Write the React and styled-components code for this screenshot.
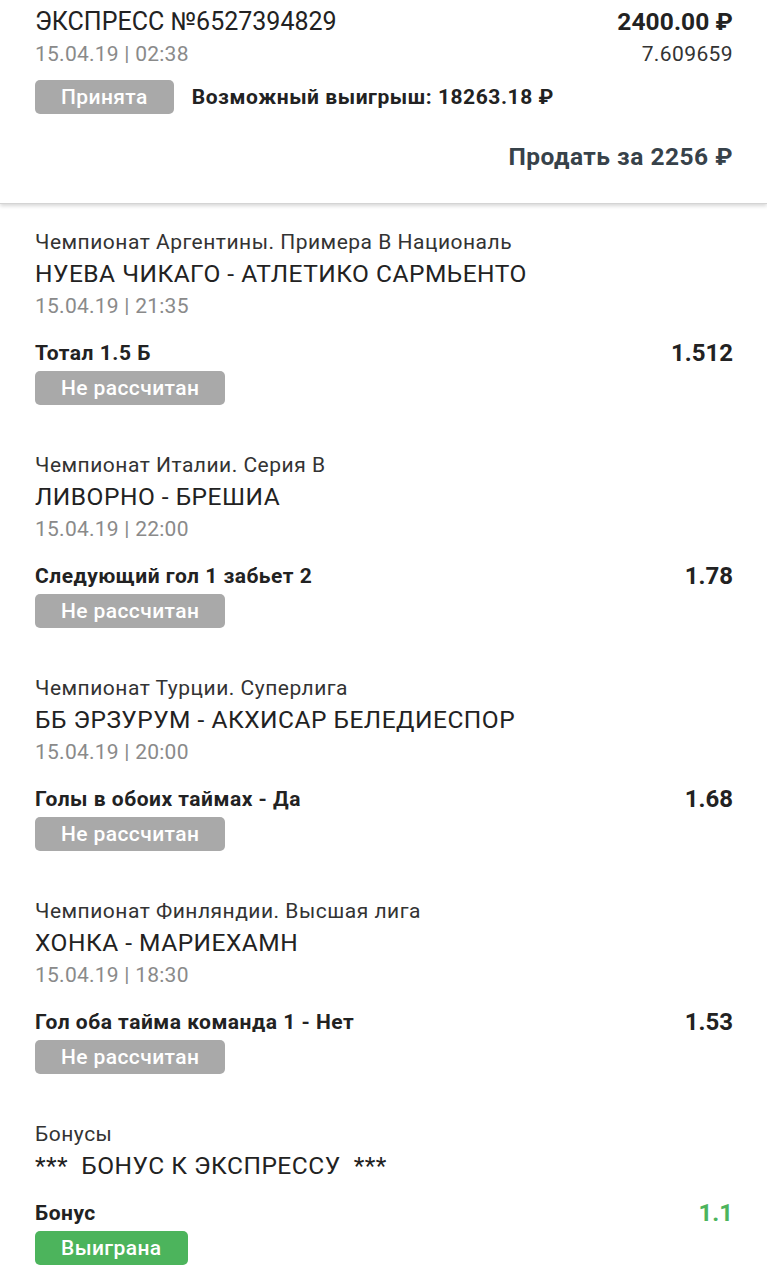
import React from "react";
import styled, { createGlobalStyle } from "styled-components";

const Global = createGlobalStyle`
  html, body { margin: 0; padding: 0; background: #ffffff; }
  body { font-family: Roboto, "Noto Sans", Arial, sans-serif; color: #222; }
`;

const Page = styled.div`
  width: 767px;
  background: #fff;
`;

const Header = styled.header`
  padding: 7px 34px 31px 35px;
  border-bottom: 1px solid #d4d4d4;
  box-shadow: 0 2px 4px rgba(0, 0, 0, 0.16);
  position: relative;
`;

const Row = styled.div`
  display: flex;
  justify-content: space-between;
  align-items: center;
  margin-top: ${(p) => p.$mt || 0}px;
`;

const Title = styled.div`
  font-size: 25px;
  line-height: 30px;
  color: #222;
`;

const Amount = styled.div`
  font-size: 24.5px;
  letter-spacing: 0.1px;
  line-height: 30px;
  font-weight: 700;
  color: #222;
`;

const Sub = styled.div`
  font-size: 21px;
  letter-spacing: ${(p) => (p.$dark ? 0.4 : 0.25)}px;
  line-height: 26px;
  color: ${(p) => (p.$dark ? "#333" : "#8a8a8a")};
`;

const Status = styled.div`
  display: flex;
  align-items: center;
  gap: 18px;
  margin-top: 13px;
`;

const Badge = styled.span`
  display: inline-flex;
  align-items: center;
  height: 34px;
  padding: 0 26px;
  border-radius: 5px;
  background: ${(p) => (p.$won ? "#4cb45c" : "#a9a9a9")};
  color: #fff;
  font-size: 21px;
  letter-spacing: 0.4px;
  font-weight: 500;
  box-sizing: border-box;
`;

const Possible = styled.span`
  font-size: 21px;
  letter-spacing: 0.55px;
  font-weight: 700;
  color: #222;
`;

const Sell = styled.div`
  margin-top: 28px;
  text-align: right;
  font-size: 24.5px;
  letter-spacing: 0.5px;
  line-height: 30px;
  font-weight: 700;
  color: #37424a;
`;

const List = styled.main`
  padding: 22px 34px 40px 35px;
  display: flex;
  flex-direction: column;
  gap: 44px;
`;

const Event = styled.section`
  display: flex;
  flex-direction: column;
`;

const League = styled.div`
  font-size: 21px;
  letter-spacing: 0.5px;
  line-height: 32px;
  color: #333;
`;

const Teams = styled.div`
  font-size: 24.5px;
  letter-spacing: 0.5px;
  line-height: 32px;
  color: #222;
`;

const DateLine = styled.div`
  font-size: 21px;
  letter-spacing: 0.25px;
  line-height: 32px;
  color: #8a8a8a;
`;

const BetRow = styled.div`
  display: flex;
  justify-content: space-between;
  align-items: center;
  margin-top: ${(p) => p.$mt}px;
  height: 28px;
`;

const BetName = styled.div`
  font-size: 21px;
  letter-spacing: 0.5px;
  font-weight: 700;
  color: #222;
`;

const Odds = styled.div`
  font-size: 24px;
  font-weight: 700;
  color: ${(p) => (p.$won ? "#4cb45c" : "#222")};
`;

const BadgeWrap = styled.div`
  margin-top: 4px;
  display: flex;
`;

const events = [
  {
    league: "Чемпионат Аргентины. Примера В Националь",
    teams: "НУЕВА ЧИКАГО - АТЛЕТИКО САРМЬЕНТО",
    date: "15.04.19 | 21:35",
    bet: "Тотал 1.5 Б",
    odds: "1.512",
  },
  {
    league: "Чемпионат Италии. Серия В",
    teams: "ЛИВОРНО - БРЕШИА",
    date: "15.04.19 | 22:00",
    bet: "Следующий гол 1 забьет 2",
    odds: "1.78",
  },
  {
    league: "Чемпионат Турции. Суперлига",
    teams: "ББ ЭРЗУРУМ - АКХИСАР БЕЛЕДИЕСПОР",
    date: "15.04.19 | 20:00",
    bet: "Голы в обоих таймах - Да",
    odds: "1.68",
  },
  {
    league: "Чемпионат Финляндии. Высшая лига",
    teams: "ХОНКА - МАРИЕХАМН",
    date: "15.04.19 | 18:30",
    bet: "Гол оба тайма команда 1 - Нет",
    odds: "1.53",
  },
];

export default function App() {
  return (
    <Page>
      <Global />
      <Header>
        <Row>
          <Title>ЭКСПРЕСС №6527394829</Title>
          <Amount>2400.00 ₽</Amount>
        </Row>
        <Row $mt={4}>
          <Sub>15.04.19 | 02:38</Sub>
          <Sub $dark>7.609659</Sub>
        </Row>
        <Status>
          <Badge>Принята</Badge>
          <Possible>Возможный выигрыш: 18263.18 ₽</Possible>
        </Status>
        <Sell>Продать за 2256 ₽</Sell>
      </Header>
      <List>
        {events.map((e) => (
          <Event key={e.teams}>
            <League>{e.league}</League>
            <Teams>{e.teams}</Teams>
            <DateLine>{e.date}</DateLine>
            <BetRow $mt={17}>
              <BetName>{e.bet}</BetName>
              <Odds>{e.odds}</Odds>
            </BetRow>
            <BadgeWrap>
              <Badge>Не рассчитан</Badge>
            </BadgeWrap>
          </Event>
        ))}
        <Event>
          <League>Бонусы</League>
          <Teams>***&nbsp; БОНУС К ЭКСПРЕССУ &nbsp;***</Teams>
          <BetRow $mt={17}>
            <BetName>Бонус</BetName>
            <Odds $won>1.1</Odds>
          </BetRow>
          <BadgeWrap>
            <Badge $won>Выиграна</Badge>
          </BadgeWrap>
        </Event>
      </List>
    </Page>
  );
}
